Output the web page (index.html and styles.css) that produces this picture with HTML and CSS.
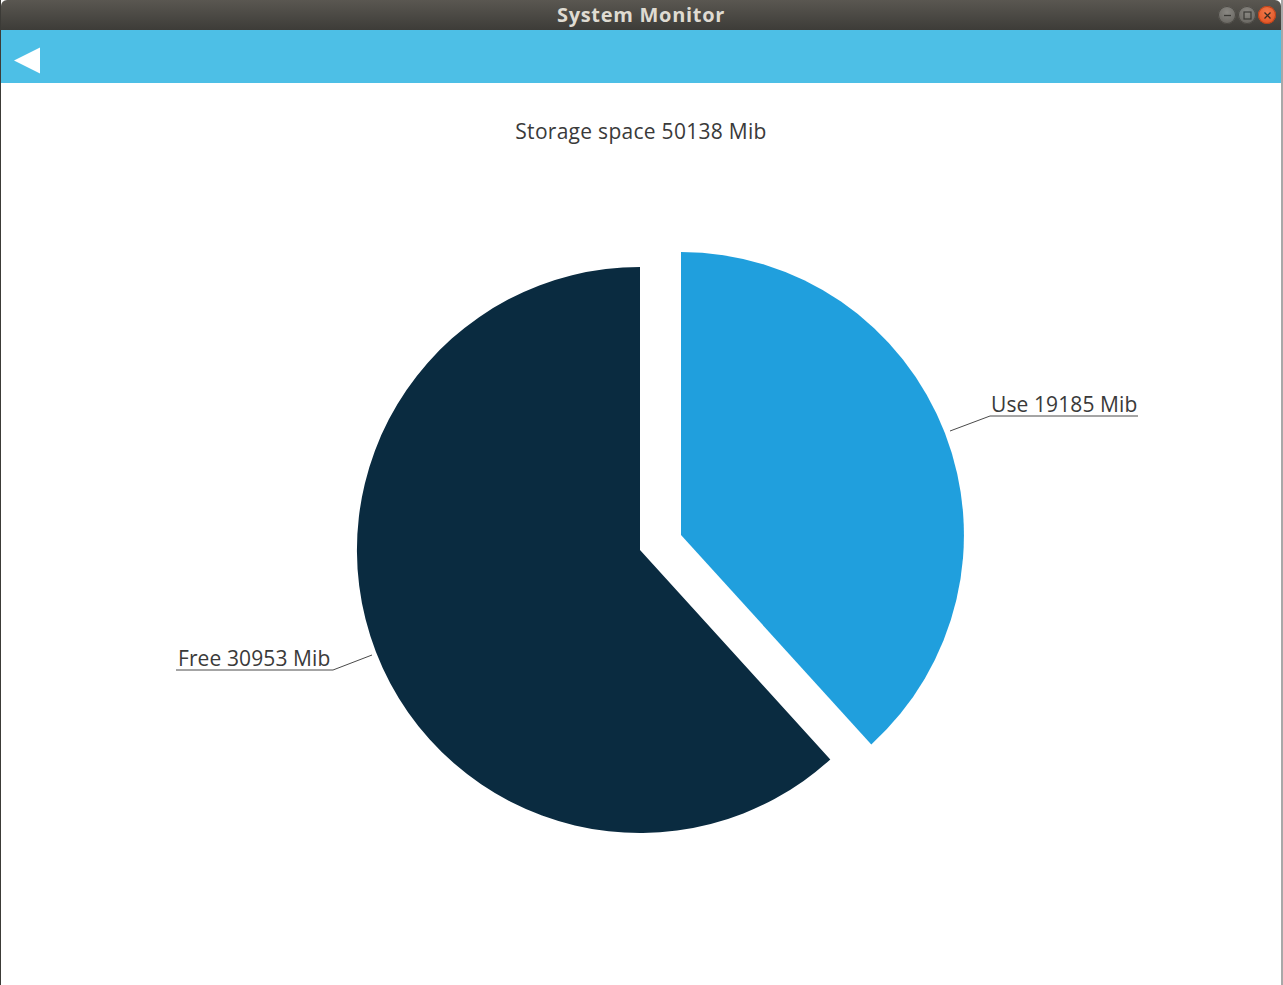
FILE: index.html
```html
<!DOCTYPE html>
<html lang="en">
<head>
<meta charset="utf-8">
<title>System Monitor</title>
<link rel="stylesheet" href="styles.css">
</head>
<body>
<div class="window">
  <div class="titlebar">
    <span class="spacer"></span>
    <span class="title">System Monitor</span>
    <div class="controls">
      <span class="ctl ctl-min"><svg width="17" height="17" viewBox="0 0 17 17"><line x1="5" y1="8.5" x2="12" y2="8.5" stroke="#3a3935" stroke-width="1.3"/></svg></span>
      <span class="ctl ctl-max"><svg width="17" height="17" viewBox="0 0 17 17"><rect x="5" y="5" width="7" height="7" fill="none" stroke="#3a3935" stroke-width="1.2"/></svg></span>
      <span class="ctl ctl-close"><svg width="17" height="17" viewBox="0 0 17 17"><path d="M5.5 5.5 L11.5 11.5 M11.5 5.5 L5.5 11.5" stroke="#3a2a20" stroke-width="1.3"/></svg></span>
    </div>
  </div>
  <div class="header">
    <button class="back" aria-label="Back">
      <svg width="27" height="27" viewBox="0 0 27 27"><polygon points="0,13.5 26,0.5 26,26.5" fill="#ffffff"/></svg>
    </button>
  </div>
  <main class="content">
    <h1 class="chart-title">Storage space 50138 Mib</h1>
    <svg class="pie" width="1280" height="840" viewBox="1 145 1280 840">
      <path d="M640,550 L640,267 A283,283 0 1 0 830.3,759.4 Z" fill="#0a2b40"/>
      <path d="M681,535 L681,252 A283,283 0 0 1 871.3,744.4 Z" fill="#209fdd"/>
      <polyline points="950,431 990,416 1138,416" fill="none" stroke="#4a4a4a" stroke-width="1"/>
      <polyline points="372,655 333,670 176,670" fill="none" stroke="#4a4a4a" stroke-width="1"/>
      <text class="pie-label" x="991" y="412">Use 19185 Mib</text>
      <text class="pie-label" x="178" y="666">Free 30953 Mib</text>
    </svg>
  </main>
</div>
</body>
</html>
```

FILE: styles.css
```css
html, body {
  margin: 0;
  padding: 0;
}

body {
  background: #a8a8a8;
  width: 1283px;
  height: 985px;
  overflow: hidden;
}

.window {
  width: 1280px;
  height: 985px;
  border-left: 1px solid #3c3b37;
  display: flex;
  flex-direction: column;
  background: #ffffff;
}

.titlebar {
  height: 30px;
  flex: none;
  display: grid;
  grid-template-columns: 1fr auto 1fr;
  align-items: center;
  background: linear-gradient(#5a5751, #3d3c38);
  border-radius: 6px 6px 0 0;
}

.title {
  font-family: "Open Sans", "DejaVu Sans", sans-serif;
  font-weight: 700;
  font-size: 20px;
  color: #dfdbd2;
  line-height: 30px;
  letter-spacing: 0.7px;
}

.controls {
  justify-self: end;
  display: flex;
  gap: 2px;
  padding-right: 5px;
}

.ctl {
  width: 18px;
  height: 18px;
  border-radius: 50%;
  display: flex;
  align-items: center;
  justify-content: center;
}

.ctl svg {
  display: block;
}

.ctl-min,
.ctl-max {
  background: radial-gradient(circle at 50% 35%, #8a8883, #5f5d58);
  box-shadow: inset 0 0 0 1px #4a4843;
}

.ctl-close {
  background: radial-gradient(circle at 50% 35%, #f27a4b, #df4a1a);
  box-shadow: inset 0 0 0 1px #b8421a;
}

.header {
  height: 53px;
  flex: none;
  background: #4dbfe6;
  display: flex;
  align-items: flex-start;
  padding-left: 13px;
  box-sizing: border-box;
  padding-top: 17px;
}

.back {
  border: 0;
  background: transparent;
  padding: 0;
  margin: 0;
  width: 27px;
  height: 27px;
  display: block;
}

.back svg {
  display: block;
}

.content {
  flex: 1;
  display: flex;
  flex-direction: column;
  align-items: center;
}

.chart-title {
  margin: 34px 0 0;
  font-family: "Open Sans", "DejaVu Sans", sans-serif;
  font-weight: 400;
  font-size: 21px;
  line-height: 28px;
  height: 28px;
  letter-spacing: 0.28px;
  color: #3a3a3a;
}

.pie {
  display: block;
  flex: none;
}

.pie-label {
  font-family: "Open Sans", "DejaVu Sans", sans-serif;
  font-size: 21px;
  letter-spacing: 0.1px;
  fill: #3a3a3a;
}
```
